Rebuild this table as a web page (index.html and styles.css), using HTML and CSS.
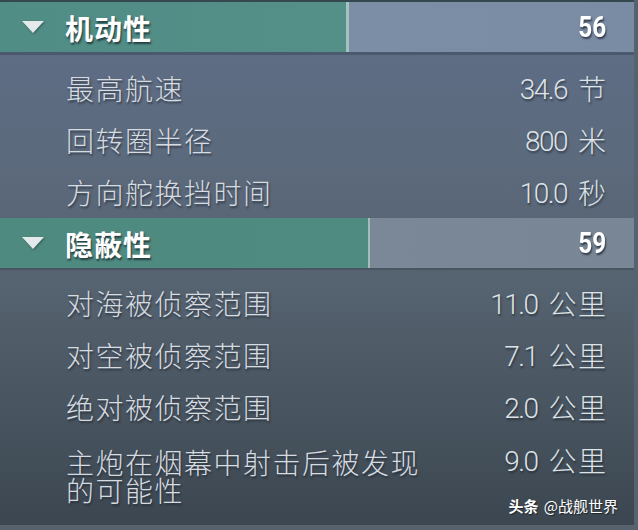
FILE: index.html
```html
<!DOCTYPE html>
<html lang="zh">
<head>
<meta charset="utf-8">
<title>舰船属性</title>
<link rel="stylesheet" href="styles.css">
</head>
<body>
<div class="panel">
  <section class="sec sec-1">
    <div class="head" style="--fill:55%">
      <span class="tri"></span>
      <span class="title">机动性</span>
      <span class="score">56</span>
    </div>
    <div class="rows">
      <div class="row"><span class="label">最高航速</span><span class="val"><span class="num">34.6</span><span class="unit">节</span></span></div>
      <div class="row"><span class="label">回转圈半径</span><span class="val"><span class="num">800</span><span class="unit">米</span></span></div>
      <div class="row"><span class="label">方向舵换挡时间</span><span class="val"><span class="num">10.0</span><span class="unit">秒</span></span></div>
    </div>
  </section>
  <section class="sec sec-2">
    <div class="head" style="--fill:58.4%">
      <span class="tri"></span>
      <span class="title">隐蔽性</span>
      <span class="score">59</span>
    </div>
    <div class="rows">
      <div class="row"><span class="label">对海被侦察范围</span><span class="val"><span class="num">11.0</span><span class="unit">公里</span></span></div>
      <div class="row"><span class="label">对空被侦察范围</span><span class="val"><span class="num">7.1</span><span class="unit">公里</span></span></div>
      <div class="row"><span class="label">绝对被侦察范围</span><span class="val"><span class="num">2.0</span><span class="unit">公里</span></span></div>
      <div class="row row-tall"><span class="label">主炮在烟幕中射击后被发现的可能性</span><span class="val"><span class="num">9.0</span><span class="unit">公里</span></span></div>
    </div>
  </section>
  <div class="mark"><b>头条</b> @战舰世界</div>
</div>
</body>
</html>
```

FILE: styles.css
```css
html, body {
  margin: 0;
  padding: 0;
}
body {
  width: 638px;
  height: 530px;
  background: #56636e;
  overflow: hidden;
  font-family: "Noto Sans CJK SC", "Noto Sans", sans-serif;
}
.panel {
  position: relative;
  width: 634px;
  height: 525px;
  border-top: 2px solid #36484f;
  box-sizing: border-box;
  overflow: hidden;
  background: linear-gradient(180deg, #5f6e88 0%, #5c6a7d 30%, #55626f 55%, #47535e 80%, #3b4650 100%);
}
.head {
  display: flex;
  align-items: center;
  height: 50px;
  padding: 0 28px 0 22px;
  border-bottom: 3px solid #4a596d;
  background: linear-gradient(90deg,
    #508d85 0,
    #548f88 calc(var(--fill) - 3px),
    #a4c2be calc(var(--fill) - 3px),
    #a4c2be var(--fill),
    #7b8ea6 var(--fill),
    #7a8ca3 100%);
}
.sec-2 .head {
  border-bottom: 2px solid #4a5562;
  background: linear-gradient(90deg,
    #4f8a80 0,
    #508b82 calc(var(--fill) - 2px),
    #a3bdb9 calc(var(--fill) - 2px),
    #a3bdb9 var(--fill),
    #7a8898 var(--fill),
    #788695 100%);
}
.tri {
  width: 0;
  height: 0;
  border-left: 11.5px solid transparent;
  border-right: 11.5px solid transparent;
  border-top: 12px solid #e4eaeb;
  margin-right: 21px;
  margin-top: 0;
  filter: drop-shadow(1px 1px 1px rgba(30, 50, 50, 0.5));
}
.title {
  flex: 1;
  color: #ffffff;
  font-size: 28px;
  font-weight: 700;
  letter-spacing: 1px;
  line-height: 50px;
  height: 50px;
  margin-top: 1px;
  text-shadow: 1px 2px 2px rgba(20, 35, 40, 0.75);
}
.score {
  color: #ffffff;
  font-family: "Roboto", "Liberation Sans", sans-serif;
  font-weight: 700;
  font-size: 29px;
  line-height: 50px;
  height: 50px;
  display: inline-block;
  transform: scaleX(0.84);
  transform-origin: right center;
  text-shadow: 1px 2px 2px rgba(20, 30, 45, 0.7);
}
.rows {
  padding-top: 7px;
}
.row {
  display: flex;
  align-items: flex-start;
  justify-content: space-between;
  height: 28px;
  padding: 12px 28px 12px 66px;
  line-height: 28px;
}
.row-tall {
  height: 56px;
  padding-top: 15px;
}
.label {
  width: 362px;
  color: #d6dbe0;
  font-size: 28px;
  font-weight: 300;
  line-height: 28px;
  letter-spacing: 1.5px;
  text-shadow: 1px 2px 2px rgba(25, 32, 42, 0.6);
}
.val {
  display: flex;
  align-items: center;
  height: 28px;
  color: #dde2e6;
  text-shadow: 1px 2px 2px rgba(25, 32, 42, 0.6);
  white-space: nowrap;
}
.row-tall .val {
  margin-top: -2px;
}
.num {
  font-family: "Roboto", "Liberation Sans", sans-serif;
  font-size: 28px;
  font-weight: 300;
  line-height: 28px;
  height: 28px;
  padding-top: 3px;
  letter-spacing: -1.5px;
  margin-right: 11px;
}
.unit {
  font-size: 28px;
  font-weight: 300;
  line-height: 28px;
  height: 28px;
  letter-spacing: 1.5px;
  margin-right: -1.5px;
}
.mark {
  position: absolute;
  right: 16px;
  bottom: 10px;
  color: #ffffff;
  font-size: 15px;
  line-height: 18px;
  text-shadow: 1px 1px 1px rgba(0, 0, 0, 0.5);
}
.mark b {
  font-weight: 700;
  margin-right: 2px;
}
```
